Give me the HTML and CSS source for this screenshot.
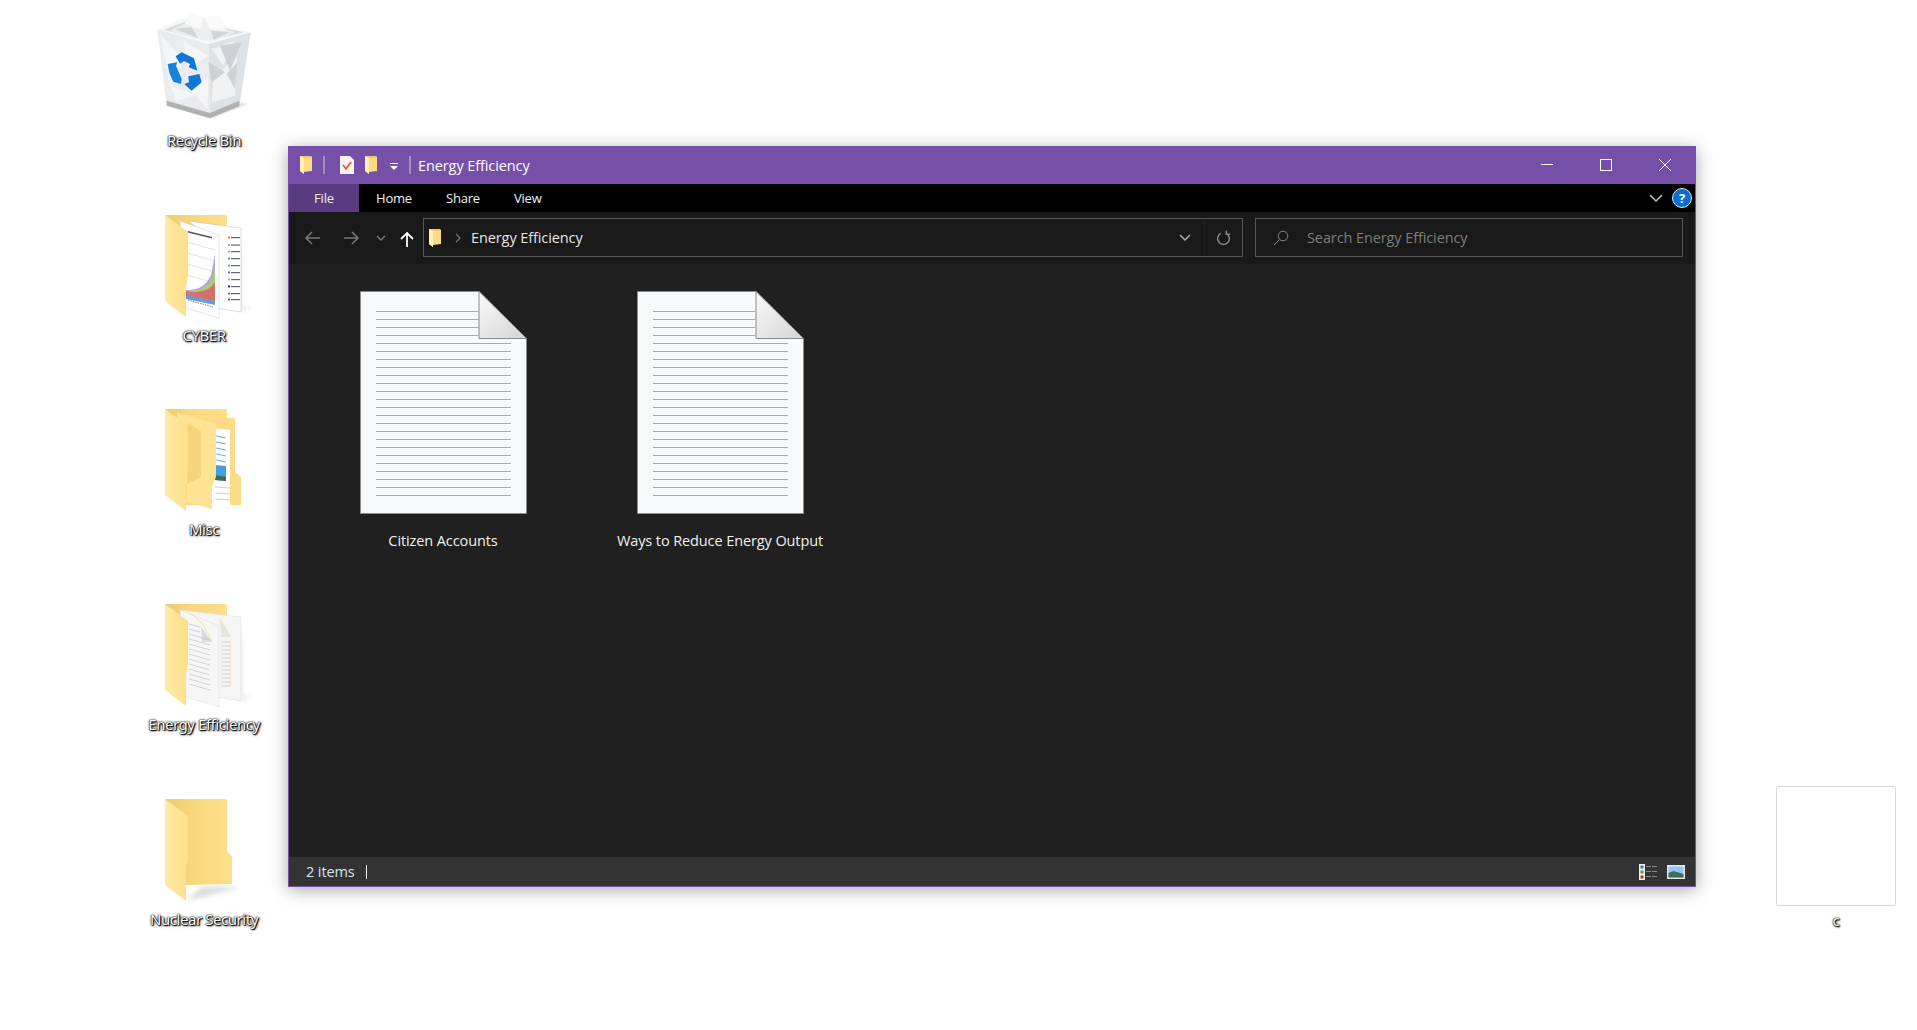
FILE: index.html
```html
<!DOCTYPE html>
<html lang="en">
<head>
    <meta charset="UTF-8">
    <title>Energy Efficiency</title>
    <link rel="stylesheet" href="styles.css">
</head>
<body>
    <svg class="defs" width="0" height="0">
        <defs>
            <linearGradient id="flap" x1="0" y1="0" x2="1" y2="0">
                <stop offset="0" stop-color="#ffe9a4"/>
                <stop offset="1" stop-color="#fcdf8a"/>
            </linearGradient>
            <linearGradient id="backpanel" x1="0" y1="0" x2="1" y2="0">
                <stop offset="0" stop-color="#eecb70"/>
                <stop offset="0.5" stop-color="#f9d97f"/>
                <stop offset="1" stop-color="#fddf8b"/>
            </linearGradient>
            <linearGradient id="foldgrad" x1="0" y1="0" x2="1" y2="1">
                <stop offset="0" stop-color="#fafafa"/>
                <stop offset="1" stop-color="#d4d4d4"/>
            </linearGradient>
            <filter id="soft"><feGaussianBlur stdDeviation="2.5"/></filter>
            <symbol id="small-folder" viewBox="0 0 12 18">
                <path d="M0 0h11l1 1v14l-8 1v2l-4-3z" fill="#fcdc84"/>
                <path d="M0 0l4 2v16l-4-3z" fill="#fff0b4"/>
                <path d="M0 0h11v2H4z" fill="#eec96a"/>
            </symbol>
            <g id="doc-page">
                <path d="M.5.500H119L166.500 48V222.500H.5z" fill="#f8f9fa" stroke="#8a8a8a"/>
                <path d="M16 20.500H118M16 28.500H118M16 36.500H118M16 44.500H118" stroke="#aaa"/>
                <path d="M16 52.500H151M16 60.500H151M16 68.500H151M16 76.500H151M16 84.500H151M16 92.500H151M16 100.500H151M16 108.500H151M16 116.500H151M16 124.500H151M16 132.500H151M16 140.500H151M16 148.500H151M16 156.500H151M16 164.500H151M16 172.500H151M16 180.500H151M16 188.500H151M16 196.500H151M16 204.500H151" stroke="#aaa"/>
                <path d="M119 .5V47.500H166.500z" fill="url(#foldgrad)" stroke="#8a8a8a"/>
            </g>
        </defs>
    </svg>

    <div class="desktop-icons">
        <div class="desk-item">
            <svg class="desk-icon" viewBox="0 0 108 118">
                <g transform="translate(-30 -13) scale(.3333)">
                    <path d="M270 358L385 315 300 300z" fill="#000" opacity=".12" filter="url(#soft)"/>
                    <path d="M112 90L265 135 270 358 140 320z" fill="#e9ecee"/>
                    <path d="M265 135L392 100 358 322 270 358z" fill="#dfe2e4"/>
                    <path d="M120 105L190 180 150 260zM190 125L265 170 205 210zM150 260L230 290 170 305zM200 260L265 240 262 330z" fill="#f3f5f6"/>
                    <path d="M275 150L345 125 310 200zM280 240L350 170 345 290 275 310z" fill="#f1f2f3"/>
                    <path d="M300 140L365 130 330 215zM265 190L315 220 275 250zM320 225L352 190 345 270z" fill="#ced2d5"/>
                    <path d="M140 305L270 342 358 305V322L270 358 140 320z" fill="#b1b1af"/>
                    <path d="M112 90L205 55 392 100 265 135z" fill="#f5f6f7"/>
                    <path d="M130 92L205 65 372 100 265 124z" fill="#d8dbdd"/>
                    <path d="M150 95L200 70 210 40 250 55 300 50 318 90 345 100 275 128 200 110z" fill="#eceeef"/>
                    <path d="M210 40L250 55 240 90 195 75zM250 55L300 50 318 95 270 90z" fill="#f9f9f9"/>
                    <path d="M165 90L215 85 235 118zM275 95L330 100 280 122z" fill="#d2d5d7"/>
                    <path d="M167 172L185 160 222 178 232 215 206 205 210 195 192 186 180 194z" fill="#0f78d4"/>
                    <path d="M143 195L172 190 168 200 185 240 183 255 160 248 148 222z" fill="#1582dc"/>
                    <path d="M205 232L238 225 245 250 215 275 193 255 207 250z" fill="#0f78d4"/>
                </g>
            </svg>
            <span class="desk-label">Recycle Bin</span>
        </div>
        <div class="desk-item">
            <svg class="desk-icon" viewBox="0 0 108 118">
                <path d="M15 8H75q2 0 2 2V40H15z" fill="url(#backpanel)"/>
                <path d="M91 24v80l11-3-18-3z" fill="#000" opacity=".12" filter="url(#soft)"/>
                <path d="M38 14L91 21V105L60 100V30z" fill="#fff" stroke="#bbb" stroke-width=".5"/>
                <g fill="#667">
                    <rect x="81" y="30" width="9" height="1.200"/><rect x="81" y="37.500" width="9" height="1.200"/><rect x="81" y="44" width="9" height="1.200"/><rect x="81" y="51" width="9" height="1.200"/><rect x="81" y="58" width="9" height="1.200"/><rect x="81" y="65" width="9" height="1.200"/><rect x="81" y="72" width="9" height="1.200"/><rect x="81" y="79" width="9" height="1.200"/><rect x="81" y="86" width="9" height="1.200"/><rect x="81" y="92" width="9" height="1.200"/>
                </g>
                <rect x="78" y="29.500" width="2" height="2" fill="#e8853a"/><rect x="78" y="37" width="2" height="2" fill="#a7a2d8"/><rect x="78" y="43.500" width="2" height="2" fill="#a8c060"/><rect x="78" y="50.500" width="2" height="2" fill="#888"/><rect x="78" y="57.500" width="2" height="2" fill="#50b0d8"/><rect x="78" y="64.500" width="2" height="2" fill="#d05050"/><rect x="78" y="71.500" width="2" height="2" fill="#9ab0e0"/><rect x="78" y="78.500" width="2" height="2" fill="#1a2aa0"/><rect x="78" y="85.500" width="2" height="2" fill="#30a880"/><rect x="78" y="91.500" width="2" height="2" fill="#7050a0"/>
                <path d="M30 14L69 28V111L36 101z" fill="#fff" stroke="#ccc" stroke-width=".5"/>
                <rect x="38" y="24" width="25" height="1.500" fill="#555" transform="rotate(14 38 24)"/>
                <path d="M37 35L65 43M37 46L65 54M37 57L65 65M37 68L65 76" stroke="#ccc" stroke-width=".6"/>
                <path d="M36 83Q54 84 61 68L65 47V95L36 88z" fill="#b0a8dc"/>
                <path d="M36 84Q56 85 62 72L65 59V95L36 88z" fill="#aecb72"/>
                <path d="M36 84Q58 88 65 75V94L36 89z" fill="#d66f6a"/>
                <path d="M36 88L65 94V98L36 92z" fill="#6a9bd8"/>
                <path d="M38 93L63 100" stroke="#888" stroke-width="1" stroke-dasharray="1.500 1"/>
                <path d="M15 8L38 25V68L36 78V110L15 94z" fill="url(#flap)"/>
            </svg>
            <span class="desk-label">CYBER</span>
        </div>
        <div class="desk-item">
            <svg class="desk-icon" viewBox="0 0 108 118">
                <path d="M15 8H75q2 0 2 2V20H15z" fill="url(#backpanel)"/>
                <path d="M27 12L83 17q2 0 2 2V71L91 76V104H27z" fill="#fbdb85"/>
                <path d="M60 27L80 29V108H60z" fill="#fff"/>
                <path d="M66 35L76 37M66 41L76 43M66 47L76 49M66 53L76 55M66 59L76 61" stroke="#63aee8"/>
                <path d="M65 64L76 65V80L65 79z" fill="#3f9fe0"/>
                <path d="M65 74L76 76V80L65 79z" fill="#3d6b55"/>
                <path d="M65 86L80 87M65 92L80 93M65 98L80 99" stroke="#ccc"/>
                <path d="M27 12L66 23V76L62 86V108L37 101V83L27 72z" fill="#fde393"/>
                <path d="M38 22L51 30V76L37 83V60z" fill="#f4d47c"/>
                <path d="M15 8L38 25V68L36 78V110L15 94z" fill="url(#flap)"/>
            </svg>
            <span class="desk-label">Misc</span>
        </div>
        <div class="desk-item">
            <svg class="desk-icon" viewBox="0 0 108 118">
                <path d="M15 8H75q2 0 2 2V40H15z" fill="url(#backpanel)"/>
                <path d="M91 24v80l11-3-18-3z" fill="#000" opacity=".12" filter="url(#soft)"/>
                <path d="M30 14L91 21V105L60 100V30z" fill="#f5f5f6" stroke="#ddd" stroke-width=".5"/>
                <path d="M70 23L80 41H71z" fill="#e4e4e4"/>
                <path d="M70 23L80 40M80 45V90" stroke="#f2d98f" stroke-width=".7" fill="none"/>
                <path d="M71 46H80M71 50H80M71 54H80M71 58H80M71 62H80M71 66H80M71 70H80M71 74H80M71 78H80M71 82H80M71 86H80M71 90H80" stroke="#c4c4c4" stroke-width=".7"/>
                <path d="M30 14L69 30V111L36 101z" fill="#f6f6f7" stroke="#ddd" stroke-width=".5"/>
                <path d="M51 30L62 46H52z" fill="#dcdcdc"/>
                <path d="M36 14L52 27 62 45" stroke="#f2d98f" stroke-width=".7" fill="none"/>
                <path d="M39 28L50 31M39 33L50 36M39 38L60 44M39 43L60 49M39 48L60 54M39 53L60 59M39 58L60 64M39 63L60 69M39 68L60 74M39 73L60 79M39 78L60 84M39 83L60 89M39 88L60 94" stroke="#bbb" stroke-width=".6"/>
                <path d="M15 8L38 25V68L36 78V110L15 94z" fill="url(#flap)"/>
            </svg>
            <span class="desk-label">Energy Efficiency</span>
        </div>
        <div class="desk-item">
            <svg class="desk-icon" viewBox="0 0 108 118">
                <path d="M36 110L52 96H92z" fill="#000" opacity=".14" filter="url(#soft)"/>
                <path d="M15 8H75q2 0 2 2V60L82 65.500V93L36 94z" fill="url(#backpanel)"/>
                <path d="M15 8L38 25V68L36 78V110L15 94z" fill="url(#flap)"/>
            </svg>
            <span class="desk-label">Nuclear Security</span>
        </div>
    </div>

    <div class="explorer">
        <div class="titlebar">
            <svg class="qa-icon"><use href="#small-folder"/></svg>
            <span class="qa-sep"></span>
            <svg class="qa-page" viewBox="0 0 14 18">
                <path d="M0 0h10l4 4v14H0z" fill="#f4f4f4"/>
                <path d="M3 9l3 4 5-7" fill="none" stroke="#e8521e" stroke-width="1.600"/>
            </svg>
            <svg class="qa-icon"><use href="#small-folder"/></svg>
            <svg class="qa-drop" viewBox="0 0 8 8">
                <path d="M0 0h8v1H0zM0 3h8L4 7z" fill="#fff"/>
            </svg>
            <span class="qa-sep"></span>
            <span class="title-text">Energy Efficiency</span>
            <div class="win-buttons">
                <svg class="win-btn" viewBox="0 0 48 20"><path d="M18 9.500h12" stroke="#fff" fill="none"/></svg>
                <svg class="win-btn" viewBox="0 0 48 20"><rect x="18.500" y="4.500" width="11" height="11" stroke="#fff" fill="none"/></svg>
                <svg class="win-btn" viewBox="0 0 48 20"><path d="M18 4l12 12M30 4L18 16" stroke="#fff" fill="none"/></svg>
            </div>
        </div>

        <div class="ribbon">
            <span class="tab tab-file">File</span>
            <span class="tab">Home</span>
            <span class="tab">Share</span>
            <span class="tab">View</span>
            <svg class="ribbon-chevron" viewBox="0 0 14 8"><path d="M1 1l6 6 6-6" fill="none" stroke="#bdbdbd" stroke-width="1.500"/></svg>
            <span class="help">?</span>
        </div>

        <div class="navbar">
            <svg class="nav-arrow" viewBox="0 0 16 14"><path d="M16 7H2M8 1L2 7l6 6" fill="none" stroke="#777" stroke-width="1.500"/></svg>
            <svg class="nav-arrow nav-forward" viewBox="0 0 16 14"><path d="M0 7h14M8 1l6 6-6 6" fill="none" stroke="#777" stroke-width="1.500"/></svg>
            <svg class="nav-recent" viewBox="0 0 10 6"><path d="M1 1l4 4 4-4" fill="none" stroke="#777" stroke-width="1.500"/></svg>
            <svg class="nav-up" viewBox="0 0 14 16"><path d="M7 16V2M1 8l6-6 6 6" fill="none" stroke="#fff" stroke-width="1.800"/></svg>
            <div class="address">
                <svg class="qa-icon"><use href="#small-folder"/></svg>
                <svg class="crumb-sep" viewBox="0 0 6 10"><path d="M1 1l4 4-4 4" fill="none" stroke="#777" stroke-width="1.200"/></svg>
                <span class="crumb">Energy Efficiency</span>
                <svg class="addr-drop" viewBox="0 0 12 7"><path d="M1 1l5 5 5-5" fill="none" stroke="#aaa" stroke-width="1.500"/></svg>
                <span class="addr-refresh">
                    <svg viewBox="0 0 16 17"><path d="M5 3.500A6.300 6.300 0 1 0 11 3.500M11 0.500V4.500H15" fill="none" stroke="#8a8a8a" stroke-width="1.600"/></svg>
                </span>
            </div>
            <div class="search">
                <svg class="search-icon" viewBox="0 0 16 16"><circle cx="10" cy="6" r="4.800" fill="none" stroke="#888"/><path d="M6.500 9.500L1 15" stroke="#888" fill="none"/></svg>
                <span>Search Energy Efficiency</span>
            </div>
        </div>

        <div class="content">
            <div class="file-item">
                <svg class="doc" viewBox="0 0 167 223"><use href="#doc-page"/></svg>
                <span class="file-name">Citizen Accounts</span>
            </div>
            <div class="file-item">
                <svg class="doc" viewBox="0 0 167 223"><use href="#doc-page"/></svg>
                <span class="file-name">Ways to Reduce Energy Output</span>
            </div>
        </div>

        <div class="statusbar">
            <span>2 items</span>
            <span class="status-sep"></span>
            <svg class="view-icon" viewBox="0 0 18 16">
                <rect x="0" y="0" width="6" height="16" fill="#eee"/>
                <rect x="1.500" y="1.500" width="3" height="3" fill="#2f7fc4"/>
                <rect x="1.500" y="6.500" width="3" height="3" fill="#7f8f2a"/>
                <rect x="1.500" y="11.500" width="3" height="3" fill="#c8331f"/>
                <path d="M7 2.500h5M13 2.500h5M7 7.500h5M13 7.500h5M7 12.500h5M13 12.500h5" stroke="#8a8a8a"/>
            </svg>
            <svg class="view-icon view-large" viewBox="0 0 18 14">
                <rect width="18" height="14" fill="#e8e8e8"/>
                <rect x="1.500" y="1.500" width="15" height="11" fill="#8fc8f0"/>
                <path d="M1.500 8l5-2 10 3v3.500h-15z" fill="#3f6b5a"/>
            </svg>
        </div>
    </div>

    <div class="thumb">
        <div class="thumb-box"></div>
        <span class="desk-label">c</span>
    </div>
</body>
</html>
```

FILE: styles.css
```css
* {
    box-sizing: border-box;
}
html, body {
    height: 100%;
}
body {
    margin: 0;
    padding: 12px 0 0 139px;
    background: #fff;
    font-family: 'Open Sans', 'Noto Sans', sans-serif;
    font-size: 14.5px;
    letter-spacing: -0.1px;
    overflow: hidden;
}
.defs {
    position: absolute;
}

/* desktop */
.desktop-icons {
    display: flex;
    flex-direction: column;
    width: 130px;
}
.desk-item {
    display: flex;
    flex-direction: column;
    align-items: center;
    height: 194.7px;
}
.desk-icon {
    width: 108px;
    height: 118px;
    flex: none;
}
.desk-label {
    height: 20px;
    line-height: 20px;
    color: #fff;
    font-family: 'Noto Sans', sans-serif;
    font-size: 15px;
    letter-spacing: -0.45px;
    white-space: nowrap;
    text-shadow: 0 0 1px #000, 1px 1px 1px #000, 0 0 2px #000, 1px 1px 3px rgba(0, 0, 0, 0.7);
}
.thumb {
    position: absolute;
    left: 1776px;
    top: 786px;
    width: 120px;
    display: flex;
    flex-direction: column;
    align-items: center;
    gap: 4px;
}
.thumb-box {
    width: 120px;
    height: 120px;
    border: 1px solid #d9d9d9;
    border-radius: 2px;
    background: #fff;
}

/* explorer window */
.explorer {
    position: absolute;
    left: 288px;
    top: 146px;
    width: 1408px;
    height: 741px;
    display: flex;
    flex-direction: column;
    border: 1px solid #7650a8;
    border-top: 0;
    box-shadow: 0 3px 16px rgba(0, 0, 0, 0.35);
    color: #fff;
}
.titlebar {
    flex: none;
    height: 38px;
    display: flex;
    align-items: center;
    padding-left: 11px;
    background: #7650a8;
}
.qa-icon {
    width: 12px;
    height: 18px;
    flex: none;
}
.qa-sep {
    width: 2px;
    height: 18px;
    margin: 0 15px 0 11px;
    background: #a68ac6;
}
.qa-page {
    width: 14px;
    height: 18px;
    margin-right: 11px;
}
.qa-drop {
    width: 8px;
    height: 8px;
    margin: 3px 0 0 13px;
}
.qa-drop + .qa-sep {
    margin: 0 7px 0 11px;
}
.win-buttons {
    margin-left: auto;
    margin-right: 6px;
    display: flex;
    gap: 11px;
}
.win-btn {
    width: 48px;
    height: 20px;
}
.ribbon {
    flex: none;
    height: 28px;
    display: flex;
    align-items: center;
    background: #000;
}
.tab {
    padding: 0 16px 0 18px;
    font-size: 13px;
    line-height: 28px;
    letter-spacing: -0.2px;
    color: #f0f0f0;
}
.tab-file {
    width: 70px;
    padding: 0;
    margin-right: 17px;
    text-align: center;
    background: #5a3b80;
}
.tab-file + .tab {
    padding-left: 0;
}
.ribbon-chevron {
    width: 14px;
    height: 8px;
    margin-left: auto;
    margin-right: 9px;
}
.help {
    width: 20px;
    height: 20px;
    margin-right: 3px;
    border: 1px solid #d6e6f6;
    border-radius: 50%;
    background: #0a6fd0;
    color: #fff;
    font-size: 13px;
    font-weight: 700;
    line-height: 18px;
    text-align: center;
}
.navbar {
    flex: none;
    height: 52px;
    display: flex;
    align-items: center;
    padding: 0 12px 1px 15px;
    background: #191919;
}
.nav-arrow {
    width: 16px;
    height: 14px;
    flex: none;
}
.nav-forward {
    margin-left: 24px;
}
.nav-recent {
    width: 10px;
    height: 6px;
    flex: none;
    margin-left: 16px;
}
.nav-up {
    width: 14px;
    height: 16px;
    flex: none;
    margin: 2px 0 0 14px;
}
.address {
    width: 820px;
    height: 39px;
    flex: none;
    display: flex;
    align-items: center;
    margin-left: 9px;
    padding-left: 5px;
    border: 1px solid #555;
}
.crumb-sep {
    width: 6px;
    height: 10px;
    margin: 0 10px 0 14px;
}
.crumb {
    color: #e6e6e6;
}
.addr-drop {
    width: 12px;
    height: 7px;
    margin-left: auto;
    margin-right: 13px;
}
.addr-refresh {
    width: 38px;
    height: 100%;
    display: flex;
    align-items: center;
    justify-content: center;
    border-left: 1px solid #222;
}
.addr-refresh svg {
    width: 15px;
    height: 16px;
}
.search {
    flex: 1;
    height: 39px;
    display: flex;
    align-items: center;
    gap: 18px;
    margin-left: 12px;
    padding-left: 17px;
    border: 1px solid #555;
    color: #7d7d7d;
}
.search-icon {
    width: 16px;
    height: 16px;
}
.content {
    flex: 1;
    display: flex;
    align-items: flex-start;
    gap: 47px;
    padding: 27px 0 0 39px;
    background: #202020;
}
.file-item {
    width: 230px;
    display: flex;
    flex-direction: column;
    align-items: center;
    gap: 17px;
}
.doc {
    width: 167px;
    height: 223px;
}
.file-name {
    line-height: 20px;
    color: #f0f0f0;
    white-space: nowrap;
}
.statusbar {
    flex: none;
    height: 29px;
    display: flex;
    align-items: center;
    padding: 0 10px 0 17px;
    background: #333;
    color: #d8e4ee;
}
.status-sep {
    width: 1px;
    height: 14px;
    margin-left: 11px;
    margin-right: auto;
    background: #eee;
}
.view-icon {
    width: 18px;
    height: 16px;
}
.view-large {
    width: 18px;
    height: 14px;
    margin-left: 10px;
}
```
